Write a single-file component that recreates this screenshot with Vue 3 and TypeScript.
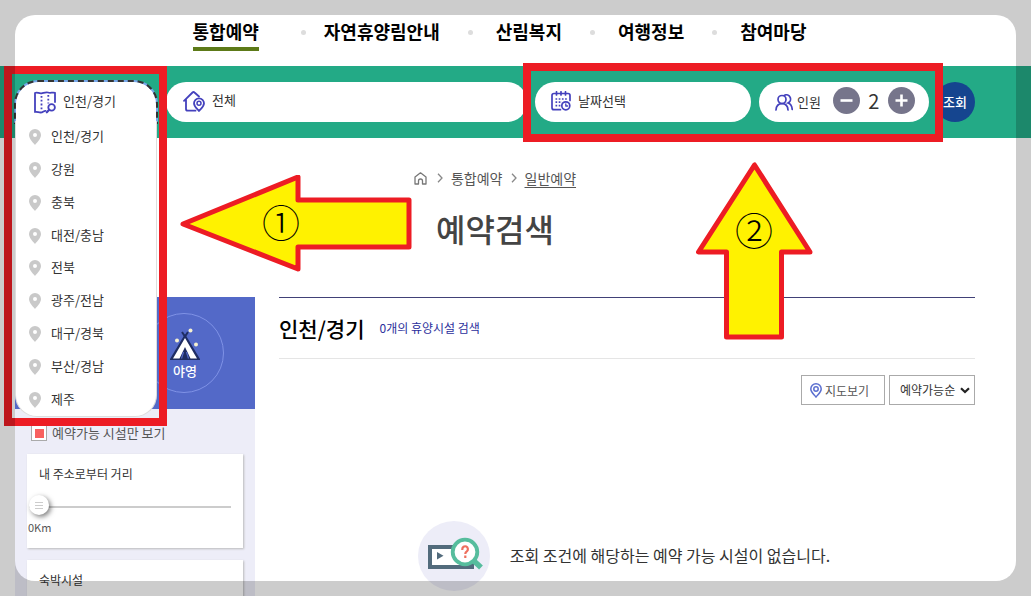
<script setup lang="ts">
import { ref } from 'vue'

const menu: string[] = ['통합예약', '자연휴양림안내', '산림복지', '여행정보', '참여마당']
const regions: string[] = ['인천/경기', '강원', '충북', '대전/충남', '전북', '광주/전남', '대구/경북', '부산/경남', '제주']

const region = ref('인천/경기')
const people = ref(2)
const onlyAvailable = ref(true)
const distance = ref(0)

function changePeople(step: number) {
  people.value = Math.max(1, people.value + step)
}
</script>

<template>
  <div class="page">
    <nav class="gnb">
      <template v-for="(item, i) in menu" :key="item">
        <i v-if="i > 0" class="dot"></i>
        <a href="#" :class="{ current: i === 0 }">{{ item }}</a>
      </template>
    </nav>

    <form class="search" @submit.prevent>
      <div class="region">
        <button type="button" class="region-button" aria-expanded="true">
          <svg width="22" height="23" viewBox="0 0 22 23" fill="none" stroke="#4441bd" stroke-width="1.8" stroke-linejoin="round" stroke-linecap="round">
            <path d="M11.500 19.800C10 19.500 9 21.500 6.500 21.500C4.500 21.500 3 20.500 1 21V2C3 .8 5 2.800 7.500 2.300C10 1.800 12 .8 14 1.500C16.500 2.500 18.500 1 21 1.800V11" />
            <path d="M7.500 5V18.500M14.300 4V12.500" stroke-dasharray="1.800 2" stroke-linecap="butt" />
            <circle cx="17.600" cy="16.400" r="3.300" /><path d="M15.200 18.800L12.800 21.300" stroke-width="2.2" />
          </svg>
          <span>{{ region }}</span>
        </button>
        <ul class="region-list">
          <li v-for="name in regions" :key="name">
            <button type="button" @click="region = name">
              <svg width="12" height="16" viewBox="0 0 12 16"><path fill="#c9c9c9" fill-rule="evenodd" d="M6 0A6 6 0 0 1 12 6C12 9.500 8.500 13 6 16C3.500 13 0 9.500 0 6A6 6 0 0 1 6 0ZM6 4A2 2 0 1 0 6 8A2 2 0 1 0 6 4Z" /></svg>
              <span>{{ name }}</span>
            </button>
          </li>
        </ul>
      </div>

      <button type="button" class="pill place">
        <svg width="22" height="21" viewBox="0 0 22 21" fill="none" stroke="#4441bd" stroke-width="1.800" stroke-linejoin="round" stroke-linecap="round">
          <path d="M1 9.800L9.500 1.500Q10.500 .5 11.500 1.500L16 5.500M3 8.500V18Q3 19.700 4.700 19.700H12.500" />
          <path d="M16 7.300A5 5 0 0 1 21 12.300C21 15.500 18 17.500 16 20C14 17.500 11 15.500 11 12.300A5 5 0 0 1 16 7.300Z" />
          <circle cx="16" cy="12.300" r="2" stroke-width="1.500" />
        </svg>
        <span>전체</span>
      </button>

      <button type="button" class="pill date">
        <svg width="20" height="20" viewBox="0 0 20 20" fill="none" stroke="#4441bd" stroke-width="1.700" stroke-linecap="round" stroke-linejoin="round">
          <path d="M9.500 18.700H3Q1 18.700 1 16.700V4.500Q1 2.500 3 2.500H17Q19 2.500 19 4.500V9.500M5.500 .8V4M10 .8V4M14.500 .8V4" />
          <path d="M4.500 8H16.500M4.500 11.200H11M4.500 14.600H10" stroke-dasharray="1.700 1.500" stroke-linecap="butt" />
          <circle cx="14.800" cy="14.800" r="4" /><path d="M14.800 12.800V15H16.600" stroke-width="1.300" />
        </svg>
        <span>날짜선택</span>
      </button>

      <div class="pill people">
        <svg width="18" height="17" viewBox="0 0 18 17" fill="none" stroke="#4441bd" stroke-width="1.700" stroke-linecap="round">
          <circle cx="7" cy="5.500" r="4" /><path d="M1 16C1.300 11.500 4 9.700 7 9.700S12.700 11.500 13 16" />
          <path d="M9.500 1.200A4.200 4.200 0 0 1 13 9C15.500 9.700 17 12 17.200 15.500" />
        </svg>
        <span class="people-label">인원</span>
        <button type="button" class="round" aria-label="인원 감소" @click="changePeople(-1)">
          <svg width="13" height="13" viewBox="0 0 13 13"><path d="M.5 6.500H12.500" stroke="#fff" stroke-width="2.600" /></svg>
        </button>
        <output>{{ people }}</output>
        <button type="button" class="round" aria-label="인원 증가" @click="changePeople(1)">
          <svg width="13" height="13" viewBox="0 0 13 13"><path d="M.5 6.500H12.500M6.500 .5V12.500" stroke="#fff" stroke-width="2.600" /></svg>
        </button>
      </div>

      <button type="submit" class="submit">조회</button>
    </form>

    <header class="heading">
      <div class="crumbs">
        <a href="#" class="home" aria-label="홈">
          <svg width="13" height="13" viewBox="0 0 13 13" fill="none" stroke="#777" stroke-width="1.300" stroke-linejoin="round"><path d="M1 5L6.500 .8L12 5V12H8.500V9A2 2 0 0 0 4.500 9V12H1Z" /></svg>
        </a>
        <svg width="6" height="10" viewBox="0 0 6 10" fill="none" stroke="#888" stroke-width="1.300"><path d="M1 .8L5 5L1 9.200" /></svg>
        <a href="#">통합예약</a>
        <svg width="6" height="10" viewBox="0 0 6 10" fill="none" stroke="#888" stroke-width="1.300"><path d="M1 .8L5 5L1 9.200" /></svg>
        <a href="#" class="here">일반예약</a>
      </div>
      <h1>예약검색</h1>
    </header>

    <div class="content">
      <aside class="side">
        <div class="kinds">
          <button type="button" class="kind">
            <svg width="30" height="33" viewBox="0 0 30 33">
              <circle cx="20.500" cy="2.500" r="2" fill="#f5f0d0" /><circle cx="7" cy="12.500" r="2" fill="#f5f0d0" /><circle cx="26" cy="16.500" r="2" fill="#f5f0d0" />
              <path d="M12 4L15 8.500L18 4" fill="none" stroke="#1f2d63" stroke-width="2" />
              <path d="M15 6L30 31V32H0V31Z" fill="#1f2d63" />
              <path d="M15 10L27 30.500H20.500L15 19L9.500 30.500H3Z" fill="#fff" />
              <path d="M13.500 24L11.500 30.500M16.500 24L18.500 30.500" stroke="#5369c8" stroke-width="1.200" />
            </svg>
            <span>야영</span>
          </button>
        </div>
        <div class="filters">
          <label class="check"><input v-model="onlyAvailable" type="checkbox" /><span>예약가능 시설만 보기</span></label>
          <section class="card">
            <label for="distance">내 주소로부터 거리</label>
            <input id="distance" v-model.number="distance" type="range" min="0" max="500" />
            <span class="km">{{ distance }}Km</span>
          </section>
          <section class="card"><h3>숙박시설</h3></section>
        </div>
      </aside>

      <main class="results">
        <div class="summary">
          <h2>{{ region }}</h2>
          <span>0개의 휴양시설 검색</span>
        </div>
        <div class="tools">
          <button type="button" class="map">
            <svg width="12" height="15" viewBox="0 0 12 15" fill="none" stroke="#5b6fd0" stroke-width="1.500"><path d="M6 .8A5.200 5.200 0 0 1 11.200 6C11.200 9 8.500 11 6 14C3.500 11 .8 9 .8 6A5.200 5.200 0 0 1 6 .8Z" /><circle cx="6" cy="6" r="2.200" /></svg>
            <span>지도보기</span>
          </button>
          <span class="sort">
            <select aria-label="정렬"><option>예약가능순</option></select>
            <svg width="10" height="7" viewBox="0 0 10 7" fill="none" stroke="#222" stroke-width="2.200"><path d="M1 1.200L5 5L9 1.200" /></svg>
          </span>
        </div>
        <div class="empty">
          <svg width="72" height="70" viewBox="0 0 72 70">
            <ellipse cx="36" cy="35" rx="36" ry="35" fill="#ededf8" />
            <rect x="12" y="26" width="42" height="20" fill="#fff" stroke="#526b7c" stroke-width="4" />
            <path d="M19 31V38.500L25.500 34.700Z" fill="#526b7c" />
            <path d="M56 40L63 46.500" stroke="#56bd9d" stroke-width="5.500" />
            <circle cx="47" cy="31" r="12.300" fill="#fff" stroke="#56bd9d" stroke-width="3.800" />
            <path d="M44.300 29V28.200A2.800 2.800 0 1 1 48.800 30.300Q47.300 31.300 47.300 33M47.300 34.500V37" fill="none" stroke="#ee6f5e" stroke-width="2.200" />
          </svg>
          <p>조회 조건에 해당하는 예약 가능 시설이 없습니다.</p>
        </div>
      </main>
    </div>

    <div class="frame frame-region"></div>
    <div class="frame frame-people"></div>
    <div class="arrow arrow-left">
      <svg width="232" height="100" viewBox="0 0 232 100"><path d="M3 49L118 2V25H229V72H118V94Z" fill="#fff200" stroke="#ed1c24" stroke-width="5" stroke-linejoin="round" /></svg>
      <span>①</span>
    </div>
    <div class="arrow arrow-up">
      <svg width="118" height="180" viewBox="0 0 118 180"><path d="M58.500 3L2.500 90H30.500V175H85.500V90H114Z" fill="#fff200" stroke="#ed1c24" stroke-width="5" stroke-linejoin="round" /></svg>
      <span>②</span>
    </div>
    <div class="shade"></div>
  </div>
</template>

<style>
body {
  margin: 0;
}
</style>

<style scoped>
.page {
  position: relative;
  display: flex;
  flex-direction: column;
  height: 100vh;
  overflow: hidden;
  background: #fff;
  color: #333;
  font-family: "Noto Sans CJK KR", "Noto Sans", sans-serif;
  font-size: 13px;
  line-height: 20px;
}
.page * {
  box-sizing: border-box;
}
button, select, input {
  margin: 0;
  padding: 0;
  border: 0;
  background: none;
  color: inherit;
  font: inherit;
}
a {
  color: inherit;
  text-decoration: none;
}
svg {
  display: block;
  flex: none;
}
h1, h2, h3, p, ul {
  margin: 0;
  padding: 0;
  list-style: none;
}
.gnb {
  display: flex;
  justify-content: center;
  flex: none;
  height: 66px;
  padding: 17px 32px 0 0;
  color: #000;
  font-size: 18px;
  font-weight: 700;
  line-height: 28px;
}
.gnb a {
  height: 34px;
}
.gnb .current {
  border-bottom: 4px solid #5d7a18;
}
.dot {
  width: 5px;
  height: 5px;
  margin: 13px 23px 0 28px;
  border-radius: 50%;
  background: #ddd;
}
.current + .dot {
  margin-right: 18px;
  margin-left: 42px;
}
.search {
  display: flex;
  align-items: flex-start;
  gap: 8px;
  flex: none;
  height: 72px;
  padding: 16px 56px 0 14px;
  background: #23aa86;
}
.region {
  position: relative;
  z-index: 2;
  width: 144px;
  height: 40px;
}
.region-button {
  display: flex;
  align-items: center;
  gap: 7px;
  width: 100%;
  height: 44px;
  margin-top: -2px;
  padding: 0 0 2px 18px;
  border: 2px dashed #333;
  border-bottom: 0;
  border-radius: 24px 24px 0 0;
  background: linear-gradient(#fff, #fff) padding-box, #76a7ea border-box;
}
.region-button span {
  padding-bottom: 2px;
}
.region-list {
  position: absolute;
  top: 39px;
  left: 1px;
  right: 1px;
  display: grid;
  grid-auto-rows: 1fr;
  height: 296px;
  border: 1px solid #ddd;
  border-top: 0;
  border-radius: 0 0 22px 22px;
  background: #fff;
}
.region-list button {
  display: flex;
  align-items: center;
  gap: 10px;
  width: 100%;
  height: 100%;
  padding-left: 13px;
}
.region-list span {
  padding-bottom: 2px;
}
.pill {
  display: flex;
  align-items: center;
  height: 40px;
  border-radius: 20px;
  background: #fff;
}
.place {
  flex: 1;
  gap: 7px;
  padding: 0 0 2px 17px;
}
.place span {
  padding-bottom: 2px;
}
.date {
  gap: 7px;
  width: 216px;
  padding: 0 0 2px 16px;
}
.people {
  width: 170px;
  padding-left: 16px;
}
.people-label {
  margin: 0 12px 0 4px;
}
.round {
  display: grid;
  place-items: center;
  width: 27px;
  height: 27px;
  margin-bottom: 3px;
  border-radius: 50%;
  background: #76758b;
}
.people output {
  width: 28px;
  margin-bottom: 2px;
  font-size: 20px;
  text-align: center;
}
.submit {
  width: 40px;
  height: 40px;
  margin-left: -2px;
  border-radius: 50%;
  background: #15458f;
  color: #fff;
  font-weight: 500;
}
.heading {
  display: flex;
  flex-direction: column;
  align-items: center;
  flex: none;
  height: 159px;
  padding: 30px 56px 0 15px;
}
.crumbs {
  display: flex;
  align-items: center;
  gap: 8px;
  color: #555;
  font-size: 14px;
}
.home {
  margin-right: 2px;
}
.here {
  text-decoration: underline;
  text-underline-offset: 3px;
}
h1 {
  margin-top: 17px;
  color: #444;
  font-size: 32px;
  font-weight: 500;
  line-height: 46px;
}
.content {
  display: flex;
  gap: 24px;
  flex: 1;
  min-height: 0;
  padding: 0 56px 0 15px;
}
.side {
  flex: none;
  width: 240px;
  background: #ededf8;
}
.kinds {
  display: flex;
  justify-content: flex-end;
  padding: 16px 31px;
  background: #5369c8;
}
.kind {
  display: flex;
  flex-direction: column;
  align-items: center;
  width: 80px;
  height: 80px;
  padding: 14px 0 12px 2px;
  border: 1px solid #7f92e6;
  border-radius: 50%;
  color: #fff;
  font-weight: 500;
}
.filters {
  display: flex;
  flex-direction: column;
  gap: 12px;
  padding: 15px 12px 0;
}
.check {
  display: flex;
  align-items: center;
  gap: 5px;
  height: 18px;
  padding-left: 4px;
  color: #555;
}
.check input {
  appearance: none;
  width: 16px;
  height: 16px;
  border: 1px solid #aaa;
  background: #fff;
}
.check input:checked {
  background: linear-gradient(#f8605f, #f8605f) center / 9px 9px no-repeat #fff;
}
.card {
  display: flex;
  flex-direction: column;
  align-items: flex-start;
  height: 94px;
  padding: 10px 12px 0 2px;
  background: #fff;
  box-shadow: 1px 1px 2px #bbb;
  font-size: 12px;
}
.card label,
.card h3 {
  padding-left: 10px;
  font-size: 12px;
  font-weight: 400;
}
.card input {
  appearance: none;
  width: 100%;
  height: 20px;
  margin-top: 11px;
  background: linear-gradient(#ccc, #ccc) center 11px / 100% 2px no-repeat;
}
.card input::-webkit-slider-thumb {
  appearance: none;
  width: 20px;
  height: 20px;
  border-radius: 50%;
  background:
    linear-gradient(#ccc, #ccc) center 7px / 8px 1px no-repeat,
    linear-gradient(#ccc, #ccc) center 10px / 8px 1px no-repeat,
    linear-gradient(#ccc, #ccc) center 13px / 8px 1px no-repeat,
    #fff;
  box-shadow: 2px 2px 5px rgba(0, 0, 0, 0.5);
}
.km {
  margin: 2px 0 0 -1px;
  color: #555;
  font-size: 11px;
}
.results {
  flex: 1;
  min-width: 0;
  border-top: 1px solid #414177;
}
.summary {
  display: flex;
  align-items: center;
  gap: 15px;
  height: 61px;
  border-bottom: 1px solid #e5e5e5;
  color: #2b2f9c;
  font-size: 12px;
}
h2 {
  color: #000;
  font-size: 21px;
  font-weight: 500;
}
.tools {
  display: flex;
  justify-content: flex-end;
  gap: 4px;
  margin-top: 16px;
  font-size: 12px;
}
.map {
  display: flex;
  align-items: center;
  gap: 3px;
  width: 84px;
  height: 30px;
  padding-left: 8px;
  border: 1px solid #aaa;
  color: #555;
}
.map span {
  padding-top: 1px;
}
.sort {
  position: relative;
}
.sort select {
  appearance: none;
  width: 86px;
  height: 30px;
  padding-left: 10px;
  border: 1px solid #aaa;
}
.sort svg {
  position: absolute;
  top: 12px;
  right: 5px;
  pointer-events: none;
}
.empty {
  display: flex;
  justify-content: center;
  align-items: center;
  gap: 20px;
  margin-top: 116px;
  padding-right: 6px;
  font-size: 16px;
}
.empty p {
  padding-bottom: 2px;
}
.frame {
  position: absolute;
  z-index: 3;
  border: 8px solid #ed1c24;
  pointer-events: none;
}
.frame-region {
  top: 66px;
  left: 4px;
  width: 163px;
  height: 360px;
}
.frame-people {
  top: 63px;
  right: 88px;
  width: 420px;
  height: 79px;
}
.arrow {
  position: absolute;
  z-index: 3;
  color: #000;
  font-size: 38px;
  font-weight: 300;
  line-height: 40px;
  pointer-events: none;
}
.arrow span {
  position: absolute;
}
.arrow-left {
  top: 175px;
  left: 180px;
}
.arrow-left span {
  top: 26px;
  left: 82px;
}
.arrow-up {
  top: 162px;
  left: 696px;
}
.arrow-up span {
  top: 47px;
  left: 39px;
}
.shade {
  position: absolute;
  z-index: 4;
  inset: 15px;
  border-radius: 20px;
  box-shadow: 0 0 0 40px rgba(0, 0, 0, 0.2);
  pointer-events: none;
}
</style>
